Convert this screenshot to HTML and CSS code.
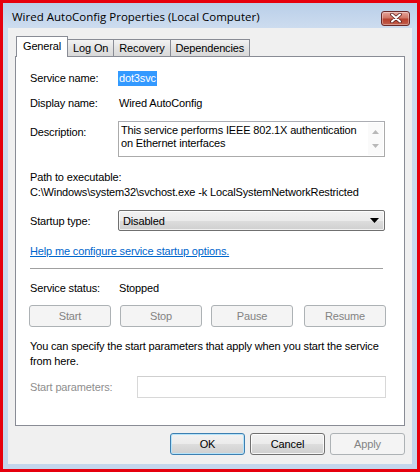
FILE: index.html
```html
<!DOCTYPE html>
<html>
<head>
<meta charset="utf-8">
<link rel="stylesheet" href="styles.css">
</head>
<body>
<div class="outer">
  <div class="window">
    <div class="titlebar">
      <span class="title">Wired AutoConfig Properties (Local Computer)</span>
      <span class="close">
        <svg width="14" height="10" viewBox="0 0 14 10"><path d="M3 1.5 L11 8.5 M11 1.5 L3 8.5" stroke="#5a2020" stroke-width="3.6" stroke-linecap="round"/><path d="M3 1.5 L11 8.5 M11 1.5 L3 8.5" stroke="#ffffff" stroke-width="2" stroke-linecap="round"/></svg>
      </span>
    </div>
    <div class="client">
      <div class="tabs">
        <div class="tab active">General</div>
        <div class="tab">Log On</div>
        <div class="tab">Recovery</div>
        <div class="tab">Dependencies</div>
      </div>
      <div class="panel">
        <div class="row r-name">
          <span class="label">Service name:</span>
          <span class="sel">dot3svc</span>
        </div>
        <div class="row r-display">
          <span class="label">Display name:</span>
          <span class="value">Wired AutoConfig</span>
        </div>
        <div class="row r-desc">
          <span class="label desc-label">Description:</span>
          <div class="descbox">
            <div class="desctext">This service performs IEEE 802.1X authentication on Ethernet interfaces</div>
            <div class="scroll">
              <svg width="7" height="4" viewBox="0 0 7 4"><path d="M0 4 L3.5 0 L7 4 Z" fill="#b8b8b8"/></svg>
              <svg width="7" height="4" viewBox="0 0 7 4"><path d="M0 0 L3.5 4 L7 0 Z" fill="#b8b8b8"/></svg>
            </div>
          </div>
        </div>
        <div class="line r-pathlabel">Path to executable:</div>
        <div class="line r-path">C:\Windows\system32\svchost.exe -k LocalSystemNetworkRestricted</div>
        <div class="row r-startup">
          <span class="label">Startup type:</span>
          <div class="select">
            <span>Disabled</span>
            <svg width="9" height="5" viewBox="0 0 9 5"><path d="M0 0 L9 0 L4.5 5 Z" fill="#000"/></svg>
          </div>
        </div>
        <div class="line r-link"><span class="link">Help me configure service startup options.</span></div>
        <div class="sep"></div>
        <div class="row r-status">
          <span class="label">Service status:</span>
          <span class="value">Stopped</span>
        </div>
        <div class="btnrow">
          <div class="btn disabled">Start</div>
          <div class="btn disabled">Stop</div>
          <div class="btn disabled">Pause</div>
          <div class="btn disabled">Resume</div>
        </div>
        <div class="para">You can specify the start parameters that apply when you start the service from here.</div>
        <div class="row r-params">
          <span class="label dim">Start parameters:</span>
          <div class="input"></div>
        </div>
      </div>
      <div class="footer">
        <div class="btn default">OK</div>
        <div class="btn">Cancel</div>
        <div class="btn disabled">Apply</div>
      </div>
    </div>
  </div>
</div>
</body>
</html>
```
FILE: styles.css
```css
html, body {
  margin: 0;
  padding: 0;
}
body {
  width: 420px;
  height: 472px;
  overflow: hidden;
  font-family: "Liberation Sans", Arial, sans-serif;
  font-size: 11px;
  letter-spacing: -0.15px;
  color: #000;
}
.outer {
  width: 420px;
  height: 472px;
  box-sizing: border-box;
  border: 3px solid #e6000e;
}
.window {
  height: 100%;
  box-sizing: border-box;
  padding: 0 5px 5px 5px;
  background: linear-gradient(to bottom, #b9cfe9 0px, #cddcef 25px, #c4d6ec 100%);
  display: flex;
  flex-direction: column;
}
.titlebar {
  height: 25px;
  flex: none;
  display: flex;
  align-items: center;
  justify-content: space-between;
  padding: 0 2px 0 4px;
}
.title {
  font-family: "Open Sans", sans-serif;
  font-size: 11.5px;
  letter-spacing: 0;
  color: #000;
  margin-top: 2px;
}
.close {
  width: 27px;
  height: 13px;
  border: 1px solid #6a2a2a;
  border-radius: 3px;
  background: linear-gradient(to bottom, #e6a49a 0%, #d07666 45%, #b8412e 55%, #c2604e 100%);
  display: flex;
  align-items: center;
  justify-content: center;
  margin-top: 5px;
  box-shadow: inset 0 0 0 1px rgba(255,255,255,0.35);
}
.close svg { display: block; }
.client {
  flex: 1;
  background: #f0f0f0;
  padding: 8px 7px 0 7px;
  display: flex;
  flex-direction: column;
}
.tabs {
  display: flex;
  align-items: flex-end;
  height: 20px;
  padding-left: 1px;
  position: relative;
  z-index: 1;
}
.tab {
  height: 17px;
  box-sizing: border-box;
  border: 1px solid #898c95;
  border-bottom: none;
  margin-left: -1px;
  background: linear-gradient(to bottom, #f3f3f3, #e3e3e3 50%, #d9d9d9);
  padding: 0 5px;
  line-height: 16px;
}
.tab.active {
  height: 21px;
  background: #fff;
  margin-bottom: -1px;
  padding: 0 6px;
  line-height: 19px;
  margin-left: 0;
  z-index: 2;
  position: relative;
}
.panel {
  background: #fff;
  border: 1px solid #898c95;
  height: 370px;
  box-sizing: border-box;
  padding: 12px 0 0 14px;
  display: flex;
  flex-direction: column;
}
.row {
  display: flex;
  align-items: center;
}
.label {
  width: 89px;
  flex: none;
}
.dim { color: #8e8e8e; }
.r-name { height: 16px; margin-top: 1px; }
.sel {
  background: #3399ff;
  color: #fff;
  padding: 0 1px;
  line-height: 15px;
  margin-left: -1px;
}
.r-display { height: 16px; margin-top: 9px; }
.r-desc { margin-top: 10px; align-items: flex-start; }
.desc-label { padding-top: 5px; }
.descbox {
  width: 267px;
  height: 36px;
  box-sizing: border-box;
  border: 1px solid #ababab;
  border-top-color: #abadb3;
  display: flex;
  margin-left: -1px;
}
.desctext {
  flex: 1;
  padding: 2px 0 0 2px;
  line-height: 13px;
}
.scroll {
  width: 15px;
  margin: 1px 1px 1px 0;
  background: #fafafa;
  display: flex;
  flex-direction: column;
  justify-content: space-between;
  align-items: center;
  padding: 7px 0 7px;
}
.scroll svg { display: block; }
.line { line-height: 15px; height: 15px; }
.r-pathlabel { margin-top: 13px; }
.r-startup { margin-top: 10px; }
.select {
  width: 267px;
  height: 21px;
  box-sizing: border-box;
  margin-left: -1px;
  border: 1px solid #707070;
  border-radius: 2px;
  background: linear-gradient(to bottom, #f2f2f2 0%, #ebebeb 50%, #dddddd 51%, #cfcfcf 100%);
  display: flex;
  align-items: center;
  justify-content: space-between;
  padding: 0 5px 0 4px;
  box-shadow: inset 0 0 0 1px rgba(255,255,255,0.7);
}
.select svg { display: block; }
.r-link { margin-top: 13px; }
.link {
  color: #0066cc;
  text-decoration: underline;
}
.sep {
  margin-top: 9px;
  width: 353px;
  height: 0;
  border-top: 1px solid #a0a0a0;
}
.r-status { margin-top: 11px; height: 15px; }
.btnrow {
  display: flex;
  gap: 9px;
  margin-top: 10px;
  margin-left: -1px;
}
.btn {
  width: 82px;
  height: 22px;
  box-sizing: border-box;
  border: 1px solid #707070;
  border-radius: 3px;
  background: linear-gradient(to bottom, #f2f2f2 0%, #ebebeb 50%, #dddddd 51%, #cfcfcf 100%);
  box-shadow: inset 0 0 0 1px rgba(255,255,255,0.8);
  display: flex;
  align-items: center;
  justify-content: center;
}
.btn.disabled {
  border-color: #adb2b5;
  background: #f4f4f4;
  color: #838383;
  box-shadow: none;
}
.btnrow .btn:last-child { margin-left: 2px; }
.para {
  margin-top: 12px;
  line-height: 15px;
  width: 360px;
}
.r-params { margin-top: 7px; }
.input {
  width: 249px;
  height: 22px;
  box-sizing: border-box;
  margin-left: 18px;
  border: 1px solid #d8d8d8;
  border-top-color: #cfcfcf;
  background: #fff;
}
.footer {
  display: flex;
  justify-content: flex-end;
  gap: 5px;
  margin-top: 7px;
}
.footer .btn { width: 75px; }
.btn.default {
  border-color: #3c7fb1;
  box-shadow: inset 0 0 0 1px #b6e3f9;
}
```
